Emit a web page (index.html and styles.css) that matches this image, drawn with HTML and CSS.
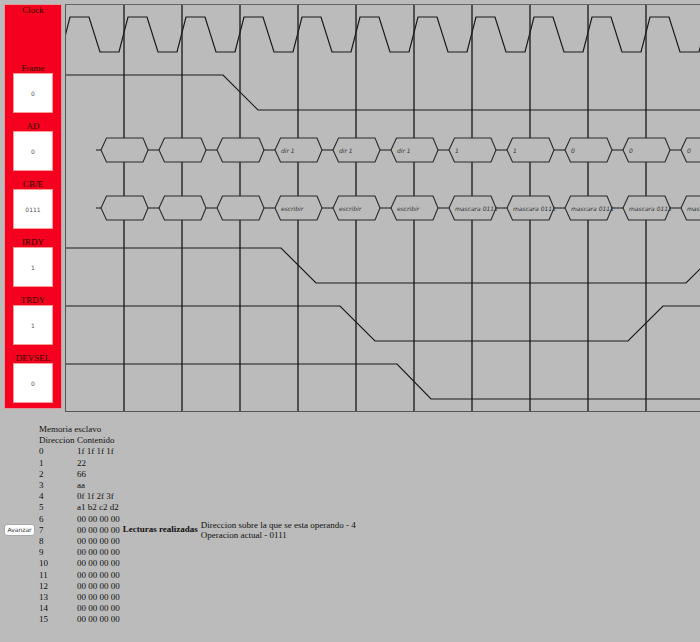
FILE: index.html
```html
<!DOCTYPE html>
<html>
<head>
<meta charset="utf-8">
<link rel="stylesheet" href="styles.css">
</head>
<body>
<div class="top">
  <div class="panel">
    <div class="sig"><div class="lbl">Clock</div><div class="spacer"></div></div>
    <div class="sig"><div class="lbl">Frame</div><div class="box">0</div></div>
    <div class="sig"><div class="lbl">AD</div><div class="box">0</div></div>
    <div class="sig"><div class="lbl">CB/E</div><div class="box">0111</div></div>
    <div class="sig"><div class="lbl">IRDY</div><div class="box">1</div></div>
    <div class="sig"><div class="lbl">TRDY</div><div class="box">1</div></div>
    <div class="sig"><div class="lbl">DEVSEL</div><div class="box">0</div></div>
  </div>
  <div class="canvas">
    <svg class="diagram" width="634" height="406" viewBox="66 5 634 406" xmlns="http://www.w3.org/2000/svg">
      <g class="grid">
        <line x1="124" y1="0" x2="124" y2="420"/>
        <line x1="182" y1="0" x2="182" y2="420"/>
        <line x1="240" y1="0" x2="240" y2="420"/>
        <line x1="298" y1="0" x2="298" y2="420"/>
        <line x1="356" y1="0" x2="356" y2="420"/>
        <line x1="414" y1="0" x2="414" y2="420"/>
        <line x1="472" y1="0" x2="472" y2="420"/>
        <line x1="530" y1="0" x2="530" y2="420"/>
        <line x1="588" y1="0" x2="588" y2="420"/>
        <line x1="646" y1="0" x2="646" y2="420"/>
      </g>
      <g class="wave">
        <path d="M61,52 L70,17 L89,17 L100,52 L119,52 L128,17 L147,17 L158,52 L177,52 L186,17 L205,17 L216,52 L235,52 L244,17 L263,17 L274,52 L293,52 L302,17 L321,17 L332,52 L351,52 L360,17 L379,17 L390,52 L409,52 L418,17 L437,17 L448,52 L467,52 L476,17 L495,17 L506,52 L525,52 L534,17 L553,17 L564,52 L583,52 L592,17 L611,17 L622,52 L641,52 L650,17 L669,17 L680,52 L699,52 L708,17"/>
        <path d="M60,75 L223,75 L258,110 L710,110"/>
        <path d="M60,248 L281,248 L316,283 L686,283 L721,248"/>
        <path d="M60,306 L340,306 L375,341 L628,341 L663,306 L710,306"/>
        <path d="M60,364 L397,364 L431,399 L710,399"/>
      </g>
      <g class="bus">
        <path d="M96,150 L710,150"/>
        <path d="M96,208 L710,208"/>
      </g>
      <g class="hex">
        <polygon points="101,150 106.5,138 143,138 148,150 143,162 106.5,162"/>
        <polygon points="159,150 164.5,138 201,138 206,150 201,162 164.5,162"/>
        <polygon points="217,150 222.5,138 259,138 264,150 259,162 222.5,162"/>
        <polygon points="275,150 280.5,138 317,138 322,150 317,162 280.5,162"/>
        <polygon points="333,150 338.5,138 375,138 380,150 375,162 338.5,162"/>
        <polygon points="391,150 396.5,138 433,138 438,150 433,162 396.5,162"/>
        <polygon points="449,150 454.5,138 491,138 496,150 491,162 454.5,162"/>
        <polygon points="507,150 512.5,138 549,138 554,150 549,162 512.5,162"/>
        <polygon points="565,150 570.5,138 607,138 612,150 607,162 570.5,162"/>
        <polygon points="623,150 628.5,138 665,138 670,150 665,162 628.5,162"/>
        <polygon points="681,150 686.5,138 723,138 728,150 723,162 686.5,162"/>

        <polygon points="101,208 106.5,196 143,196 148,208 143,220 106.5,220"/>
        <polygon points="159,208 164.5,196 201,196 206,208 201,220 164.5,220"/>
        <polygon points="217,208 222.5,196 259,196 264,208 259,220 222.5,220"/>
        <polygon points="275,208 280.5,196 317,196 322,208 317,220 280.5,220"/>
        <polygon points="333,208 338.5,196 375,196 380,208 375,220 338.5,220"/>
        <polygon points="391,208 396.5,196 433,196 438,208 433,220 396.5,220"/>
        <polygon points="449,208 454.5,196 491,196 496,208 491,220 454.5,220"/>
        <polygon points="507,208 512.5,196 549,196 554,208 549,220 512.5,220"/>
        <polygon points="565,208 570.5,196 607,196 612,208 607,220 570.5,220"/>
        <polygon points="623,208 628.5,196 665,196 670,208 665,220 628.5,220"/>
        <polygon points="681,208 686.5,196 723,196 728,208 723,220 686.5,220"/>
      </g>
      <g class="val">
        <text x="281" y="152.5">dir 1</text>
        <text x="339" y="152.5">dir 1</text>
        <text x="397" y="152.5">dir 1</text>
        <text x="455" y="152.5">1</text>
        <text x="513" y="152.5">1</text>
        <text x="571" y="152.5">0</text>
        <text x="629" y="152.5">0</text>
        <text x="687" y="152.5">0</text>

        <text x="281" y="210.5">escribir</text>
        <text x="339" y="210.5">escribir</text>
        <text x="397" y="210.5">escribir</text>
        <text x="455" y="210.5">mascara 0111</text>
        <text x="513" y="210.5">mascara 0111</text>
        <text x="571" y="210.5">mascara 0111</text>
        <text x="629" y="210.5">mascara 0111</text>
        <text x="687" y="210.5">mascara 0111</text>
      </g>
    </svg>
  </div>
</div>

<div class="bottom">
  <button class="btn">Avanzar</button>
  <div class="memwrap">
    <table class="mem">
      <tr><td colspan="2">Memoria esclavo</td></tr>
      <tr><td class="c1">Direccion</td><td>Contenido</td></tr>
      <tr><td class="c1">0</td><td>1f 1f 1f 1f</td></tr>
      <tr><td class="c1">1</td><td>22</td></tr>
      <tr><td class="c1">2</td><td>66</td></tr>
      <tr><td class="c1">3</td><td>aa</td></tr>
      <tr><td class="c1">4</td><td>0f 1f 2f 3f</td></tr>
      <tr><td class="c1">5</td><td>a1 b2 c2 d2</td></tr>
      <tr><td class="c1">6</td><td>00 00 00 00</td></tr>
      <tr><td class="c1">7</td><td>00 00 00 00</td></tr>
      <tr><td class="c1">8</td><td>00 00 00 00</td></tr>
      <tr><td class="c1">9</td><td>00 00 00 00</td></tr>
      <tr><td class="c1">10</td><td>00 00 00 00</td></tr>
      <tr><td class="c1">11</td><td>00 00 00 00</td></tr>
      <tr><td class="c1">12</td><td>00 00 00 00</td></tr>
      <tr><td class="c1">13</td><td>00 00 00 00</td></tr>
      <tr><td class="c1">14</td><td>00 00 00 00</td></tr>
      <tr><td class="c1">15</td><td>00 00 00 00</td></tr>
    </table>
  </div>
  <b class="lect">Lecturas realizadas</b>
  <div class="info">
    <div>Direccion sobre la que se esta operando - 4</div>
    <div>Operacion actual - 0111</div>
  </div>
</div>
</body>
</html>
```

FILE: styles.css
```css
html, body {
  margin: 0;
  padding: 0;
  background: #bbbbbb;
  overflow: hidden;
}

body {
  font-family: "Liberation Serif", "Times New Roman", serif;
  color: #111;
  width: 700px;
  height: 642px;
}

.top {
  display: flex;
  align-items: flex-start;
  padding: 4px 0 0 4px;
  height: 408px;
}

.panel {
  box-sizing: border-box;
  width: 58px;
  height: 405px;
  background: #f5001e;
  border: 1px solid #d99;
  display: flex;
  flex-direction: column;
  align-items: center;
}

.sig {
  display: flex;
  flex-direction: column;
  align-items: center;
  margin-bottom: 8px;
}

.lbl {
  font-size: 9px;
  line-height: 10px;
  height: 10px;
  color: #2a0000;
  white-space: nowrap;
}

.spacer {
  height: 40px;
}

.box {
  box-sizing: border-box;
  width: 40px;
  height: 40px;
  background: #fff;
  border: 1px solid #f99;
  display: flex;
  align-items: center;
  justify-content: center;
  font-family: "DejaVu Sans", sans-serif;
  font-size: 6px;
  color: #555;
}

.canvas {
  margin-left: 3px;
  border-top: 1px solid #666;
  border-left: 1px solid #555;
  border-bottom: 1px solid #555;
  height: 406px;
  overflow: hidden;
}

.diagram {
  display: block;
}

.grid line {
  stroke: #222;
  stroke-width: 1.4;
}

.wave path,
.bus path {
  fill: none;
  stroke: #1a1a1a;
  stroke-width: 1.2;
}

.hex polygon {
  fill: #bbbbbb;
  stroke: #2a2a2a;
  stroke-width: 1.1;
}

.val text {
  font-family: "DejaVu Sans", sans-serif;
  font-style: italic;
  font-size: 6px;
  fill: #333;
}

.bottom {
  display: flex;
  align-items: center;
  padding-left: 4px;
  margin-top: 12px;
}

.btn {
  box-sizing: border-box;
  width: 31px;
  height: 12px;
  padding: 0;
  margin: 0 4px 0 0;
  background: #fff;
  border: 1px solid #a8a8a8;
  border-radius: 3px;
  font-family: "DejaVu Sans", sans-serif;
  font-size: 6px;
  color: #333;
  line-height: 10px;
}

.memwrap {
  padding-bottom: 10px;
}

.mem {
  border-collapse: collapse;
  border-spacing: 0;
  font-size: 9px;
}

.mem td {
  padding: 0;
  line-height: 11.2px;
  height: 11.2px;
  white-space: nowrap;
  vertical-align: middle;
}

.mem td.c1 {
  padding-right: 2.5px;
}

.lect {
  font-size: 9px;
  line-height: 11px;
  margin-left: 3px;
  white-space: nowrap;
}

.info {
  font-size: 9px;
  line-height: 10px;
  margin-left: 3px;
  white-space: nowrap;
}
```
